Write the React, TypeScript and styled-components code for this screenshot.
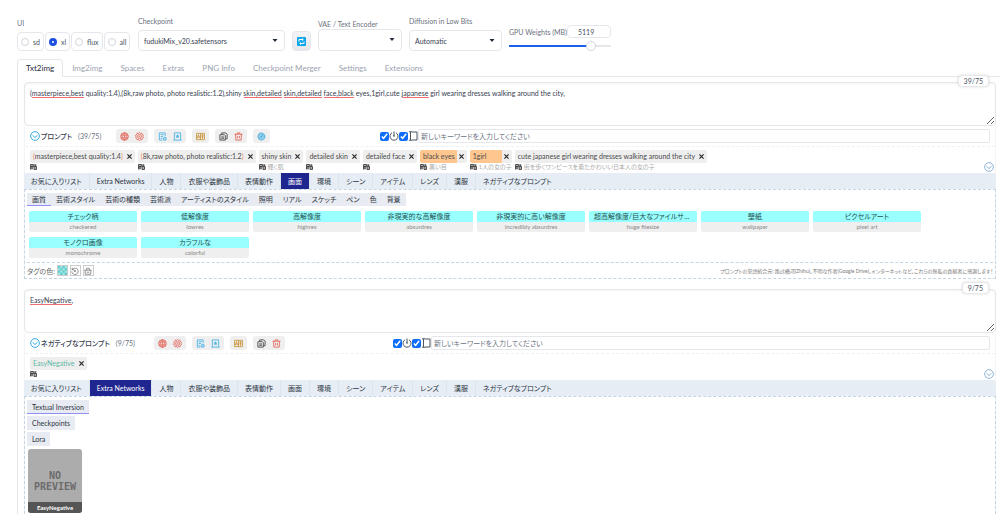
import React, { useLayoutEffect, useState } from "react";
import styled, { createGlobalStyle, css } from "styled-components";

const FONT = 'Lato, "Noto Sans CJK JP", sans-serif';

const GlobalStyle = createGlobalStyle`
  * { box-sizing: border-box; }
  body { margin: 0; background: #fff; color: #4b5563; font: 7px/10px ${FONT}; font-feature-settings: "palt"; }
  button, input, select, textarea { font: inherit; font-feature-settings: inherit; color: inherit; margin: 0; }
  button { padding: 0; border: 0; background: none; }
`;

/* ---------- header ---------- */

const Header = styled.header`
  display: flex;
  align-items: flex-end;
  gap: 7px;
  padding: 16px 17px 8px;
`;

const Field = styled.div<{ $width: number; $gap?: number }>`
  display: flex;
  flex: none;
  flex-direction: column;
  gap: ${(p) => p.$gap ?? 4}px;
  width: ${(p) => p.$width}px;
`;

const FieldLabel = styled.label`
  color: #6b7280;
  font-size: 7px;
  line-height: 10px;
  white-space: nowrap;
`;

const RadioGroup = styled.div`
  display: flex;
  gap: 1px;
`;

const RadioLabel = styled.label`
  display: flex;
  align-items: center;
  gap: 4px;
  height: 19px;
  padding: 0 3px;
  border: 1px solid #e5e7eb;
  border-radius: 4px;
  font-size: 7px;
`;

const Radio = styled.input`
  appearance: none;
  width: 8px;
  height: 8px;
  border: 1px solid #d1d5db;
  border-radius: 50%;
  background: #fff;
  &:checked { border: 3px solid #1d4fe0; }
`;

const SelectWrap = styled.div<{ $tall?: boolean }>`
  display: flex;
  position: relative;
  height: ${(p) => (p.$tall ? 22 : 21)}px;
  svg { position: absolute; right: 7px; top: 8px; pointer-events: none; }
`;

const Select = styled.select`
  appearance: none;
  width: 100%;
  padding: 0 16px 0 5px;
  border: 1px solid #e5e7eb;
  border-radius: 4px;
  background: #fff;
  font-size: 7px;
  color: #374151;
`;

const RefreshButton = styled.button`
  display: flex;
  align-items: center;
  justify-content: center;
  width: 19px;
  height: 20px;
  border: 1px solid #e5e7eb;
  border-radius: 4px;
  background: linear-gradient(#f3f4f6, #e5e7eb);
`;

const WeightRow = styled.div`
  display: flex;
  align-items: center;
  justify-content: space-between;
`;

const NumberBox = styled.input`
  width: 44px;
  height: 13px;
  padding: 0 10px;
  border: 1px solid #e5e7eb;
  border-radius: 4px;
  font-size: 7px;
`;

const Slider = styled.input`
  appearance: none;
  width: 100%;
  height: 10px;
  background: linear-gradient(90deg, #1d5fe8 80%, #e5e7eb 80%) center / 100% 2px no-repeat;
  &::-webkit-slider-thumb {
    appearance: none;
    width: 10px;
    height: 10px;
    border: 1px solid #d1d5db;
    border-radius: 50%;
    background: #fff;
  }
`;

/* ---------- main tabs ---------- */

const MainTabs = styled.nav`
  display: flex;
  height: 18px;
  margin-left: 17px;
  border-bottom: 1px solid #e5e7eb;
`;

const MainTab = styled.button<{ $active?: boolean }>`
  height: 18px;
  padding: 0 8px;
  font-size: 8px;
  line-height: 17px;
  color: #9ca3af;
  border: 1px solid transparent;
  border-bottom: 0;
  ${(p) => p.$active && css`
    color: #1f2937;
    background: #fff;
    border-color: #e5e7eb;
    border-radius: 4px 4px 0 0;
  `}
`;

const Panel = styled.main`
  margin-left: 17px;
  padding: 5px 4px 0 6px;
  border-left: 1px solid #e5e7eb;
`;

/* ---------- prompt block ---------- */

const PromptBlock = styled.section`
  margin-bottom: 10px;
  &:last-child { margin-bottom: 0; }
`;

const PromptField = styled.div`
  position: relative;
  display: flex;
`;

const PromptText = styled.textarea`
  display: block;
  width: 100%;
  height: 44px;
  padding: 5px;
  border: 1px solid #e5e7eb;
  border-radius: 4px;
  outline: 0;
  box-shadow: inset 0 1px 2px #0000000d;
  font-size: 7px;
  line-height: 10px;
  color: #374151;
`;

const Squiggle = styled.span`
  position: absolute;
  top: 15px;
  height: 1px;
  background: #f26d6d;
  pointer-events: none;
`;

const TokenBadge = styled.span`
  position: absolute;
  right: 7px;
  top: -7px;
  padding: 0 5px;
  border: 1px solid #e5e7eb;
  border-radius: 4px;
  background: #fff;
  box-shadow: 0 0 3px #0002;
  font-size: 7px;
  line-height: 10px;
`;

const ToolBox = styled.div`
  border: solid #f3f4f6;
  border-width: 0 1px;
`;

const Toolbar = styled.div`
  display: flex;
  align-items: center;
  height: 21px;
  padding: 0 5px;
  border-bottom: 1px dashed #f0f1f3;
`;

const Title = styled.div<{ $width: number }>`
  display: flex;
  align-items: center;
  gap: 1px;
  width: ${(p) => p.$width}px;
  flex: none;
  color: #374151;
  white-space: nowrap;
`;

const TitleText = styled.h2`
  margin: 0;
  font-size: 7px;
  line-height: 12px;
  font-weight: 500;
`;

const Count = styled.span`
  margin-left: 5px;
  font-size: 7px;
  color: #6b7280;
`;

const Tools = styled.div<{ $width: number }>`
  display: flex;
  gap: 6px;
  flex: none;
  width: ${(p) => p.$width}px;
`;

const ToolGroup = styled.div`
  display: flex;
  align-items: center;
  gap: 6px;
  height: 14px;
  padding: 0 4px;
  border-radius: 3px;
  background: #efefef;
`;

const ToolButton = styled.button<{ $color: string }>`
  display: flex;
  color: ${(p) => p.$color};
`;

const Toggle = styled.label`
  display: flex;
  align-items: center;
  flex: none;
`;

const Check = styled.input`
  width: 9px;
  height: 9px;
  accent-color: #0d6efd;
`;

const Keyword = styled.input`
  flex: 1;
  min-width: 0;
  height: 14px;
  padding: 0 2px;
  border: 1px solid #e5e7eb;
  border-radius: 2px;
  font-size: 7px;
  &::placeholder { color: #6b7280; opacity: 1; }
`;

const TagArea = styled.div`
  display: flex;
  align-items: flex-start;
  gap: 3px;
  height: 26px;
  padding: 3px 1px 0 5px;
`;

const TagItem = styled.div`
  display: flex;
  flex-direction: column;
`;

const Tag = styled.div`
  display: flex;
  height: 13px;
  border-radius: 2px;
  background: #eee;
  overflow: hidden;
`;

const TagText = styled.span<{ $tone?: "hot" | "net" }>`
  flex: 1;
  padding: 0 2px 0 3px;
  font-size: 7px;
  line-height: 12px;
  white-space: nowrap;
  color: ${(p) => (p.$tone === "net" ? "#5fb8a5" : "#4b4b4b")};
  background: ${(p) => (p.$tone === "hot" ? "#ffc78f" : "transparent")};
`;

const Paren = styled.span`
  color: #f08a5d;
`;

const TagClose = styled.button`
  display: flex;
  align-items: center;
  padding: 0 2px 0 1px;
  color: #222;
`;

const Translation = styled.div`
  display: flex;
  align-items: center;
  gap: 2px;
  height: 8px;
  color: #aaa;
  font-size: 6px;
  line-height: 8px;
  white-space: nowrap;
`;

const FoldButton = styled.button`
  display: flex;
  margin: 12px 0 0 auto;
  color: #8db4d8;
`;

/* ---------- keyword groups ---------- */

const GroupTabs = styled.div`
  display: flex;
  height: 16px;
  margin: 0 -1px;
  border-radius: 3px 3px 0 0;
  background: #e6edf5;
`;

const GroupTab = styled.button<{ $active?: boolean }>`
  padding: 0 7px;
  border-right: 1px solid #dce4ec;
  font-size: 7px;
  line-height: 15px;
  white-space: nowrap;
  color: ${(p) => (p.$active ? "#fff" : "#2b3440")};
  background: ${(p) => (p.$active ? "#20268f" : "transparent")};
  &:last-child { border-right: 0; }
`;

const GroupBody = styled.div<{ $open?: boolean }>`
  margin: 0 -1px;
  padding: 3px 2px 0;
  border: 1px dashed #c5d5e2;
  ${(p) => p.$open && css`border-bottom: 0; padding-bottom: 1px;`}
`;

const SubTabs = styled.div<{ $column?: boolean }>`
  display: flex;
  flex-direction: ${(p) => (p.$column ? "column" : "row")};
  align-items: flex-start;
  gap: ${(p) => (p.$column ? 2 : 0)}px;
`;

const SubTab = styled.button<{ $active?: boolean; $tall?: boolean }>`
  height: ${(p) => (p.$tall ? 14 : 13)}px;
  padding: 0 5px;
  background: #e8ebf1;
  border-bottom: 1px solid ${(p) => (p.$active ? "#8f8ff5" : "#e8ebf1")};
  font-size: 7px;
  line-height: 12px;
  white-space: nowrap;
  color: #2b3440;
`;

const CardGrid = styled.div`
  display: grid;
  grid-template-columns: repeat(auto-fill, 108px);
  gap: 5px 4px;
  padding: 5px 2px 4px;
`;

const Card = styled.button`
  display: flex;
  flex-direction: column;
  height: 21px;
  border-radius: 2px;
  overflow: hidden;
  background: #efefef;
  text-align: center;
`;

const CardName = styled.span`
  width: 100%;
  height: 11px;
  padding: 0 5px;
  background: #99ffff;
  font-size: 7px;
  line-height: 10px;
  color: #1f4f4f;
  white-space: nowrap;
  overflow: hidden;
  text-overflow: ellipsis;
`;

const CardTag = styled.span`
  width: 100%;
  font-size: 6px;
  line-height: 10px;
  color: #888;
`;

const BodyFooter = styled.footer`
  display: flex;
  align-items: center;
  gap: 2px;
  height: 16px;
  border-top: 1px dashed #c5d5e2;
  font-size: 7px;
  color: #666;
`;

const Swatch = styled.button`
  display: flex;
  align-items: center;
  justify-content: center;
  width: 11px;
  height: 11px;
  border: 1px solid #ccc;
  color: #777;
`;

const Credits = styled.small`
  margin-left: auto;
  font-size: 5px;
  line-height: 10px;
  color: #777;
  white-space: nowrap;
`;

const Preview = styled.figure`
  display: flex;
  flex-direction: column;
  width: 54px;
  height: 64px;
  margin: 3px 1px 0;
  border-radius: 3px;
  overflow: hidden;
  background: #acacac;
  text-align: center;
`;

const PreviewArt = styled.div`
  flex: 1;
  padding-top: 21px;
  font: bold 10px/11px "DejaVu Sans Mono", monospace;
  color: #6b6b6b;
`;

const PreviewName = styled.figcaption`
  background: #555;
  color: #fff;
  font-size: 6px;
  line-height: 11px;
  font-weight: 700;
`;

/* ---------- icons ---------- */

const Caret = () => (
  <svg width="6" height="5" viewBox="0 0 6 5"><path d="M0.5 1h5L3 4z" fill="#1f2937" /></svg>
);

const iconShapes = {
  globe: <><circle cx="10" cy="10" r="8.5" fill="currentColor" fillOpacity=".25" /><path d="M2 7h16M2 13h16M10 1.5v17M10 1.5c-6 5-6 12 0 17M10 1.5c6 5 6 12 0 17" strokeWidth="1.500" /></>,
  gear: <><path d="M10 1l2.4 2 3-.4.7 3 2.6 1.6L17.600 10l1.100 2.800-2.600 1.600-.7 3-3-.4L10 19l-2.400-2-3 .4-.7-3-2.600-1.600L2.400 10 1.300 7.200l2.600-1.600.7-3 3 .4z" /><circle cx="10" cy="10" r="4.500" /><circle cx="10" cy="10" r="1" /></>,
  history: <><path d="M16 9V2H3v16h7M6 6h7M6 10h5M6 14h3" /><circle cx="15" cy="15" r="3.500" fill="currentColor" fillOpacity=".4" /></>,
  bookmark: <><path d="M3 18V2h14v16" /><path d="M1 18h18" /><path d="M10 5l1.500 3 3 .4-2.200 2.200.5 3.200-2.800-1.500-2.800 1.500.5-3.200-2.200-2.200 3-.4z" fill="currentColor" stroke="none" /></>,
  translate: <><path d="M1 3h18v14H1zM10 3v14" /><path d="M3 14l2.500-8L8 14M4 11h3M12 7h5M14.500 5v10M12 11h5" /></>,
  copy: <><path d="M6 5V2h9l3 3v10h-3" /><path d="M2 6h10l2 2v10H2zM5 11h6M5 14h6" /></>,
  trash: <><path d="M1 5h18M7 5V2h6v3M3.500 5l.5 13h12l.5-13M8 9v5M12 9v5" /></>,
  openai: <><circle cx="10" cy="10" r="8.500" fill="currentColor" fillOpacity=".45" stroke="none" /><path d="M5 3l6-1 6 5v6l-5 5-7-1-3-7zM6 13l8-7M6 8l5 5M10 5l4 5" strokeWidth="1.500" /></>,
  down: <><circle cx="10" cy="10" r="8.700" /><path d="M5 8.500l5 4.500 5-4.500" /></>,
  power: <><path d="M6 3.500a8 8 0 1 0 8 0M10 1v9M8 10h4" /></>,
  cursor: <><path d="M8 2h10v16H8M5 2v16M2 1.500h6M2 18.500h6" /></>,
  close: <><path d="M4 4l12 12M16 4L4 16" strokeWidth="3" /></>,
  reset: <><path d="M3 7a8 8 0 1 1-1 4M3 2v5h5" /><circle cx="10" cy="10" r="1.500" fill="currentColor" /></>,
  basket: <><path d="M1 8h18M3 8v10h14V8M6 8l1-5h6l1 5M7 13h6" /></>,
};

const Icon = ({ name, size = 10 }: { name: keyof typeof iconShapes; size?: number }) => (
  <svg width={size} height={size} viewBox="0 0 20 20" fill="none" stroke="currentColor" strokeWidth="2">
    {iconShapes[name]}
  </svg>
);

const MiniTranslate = () => (
  <svg width="7" height="6" viewBox="0 0 14 12" fill="none" stroke="#222" strokeWidth="1.500">
    <path d="M1 1h6v4H1zM4 1v10M1 8h5M1 5v6M8 2h5M10.500 1v4M8 5h5v6H8zM8 8h5" />
  </svg>
);

const RefreshIcon = () => (
  <svg width="9" height="9" viewBox="0 0 18 18" fill="none" stroke="#fff" strokeWidth="2">
    <rect width="18" height="18" rx="2" fill="#0ea5e9" stroke="none" />
    <path d="M4 9V5h8M10 3l2.500 2L10 7M14 9v4H6M8 11l-2.500 2L8 15" />
  </svg>
);

const Checker = () => (
  <svg width="11" height="11" viewBox="0 0 4 4">
    <rect width="4" height="4" fill="#9fe9e6" />
    <path d="M0 0h1v1H0zM2 0h1v1H2zM1 1h1v1H1zM3 1h1v1H3zM0 2h1v1H0zM2 2h1v1H2zM1 3h1v1H1zM3 3h1v1H3z" fill="#63c9c9" />
  </svg>
);

/* ---------- data ---------- */

const groups = ["お気に入りリスト", "Extra Networks", "人物", "衣服や装飾品", "表情動作", "画面", "環境", "シーン", "アイテム", "レンズ", "漢服", "ネガティブなプロンプト"];
const subGroups = ["画質", "芸術スタイル", "芸術の種類", "芸術派", "アーティストのスタイル", "照明", "リアル", "スケッチ", "ペン", "色", "背景"];
const cards = [
  ["チェック柄", "checkered"], ["低解像度", "lowres"], ["高解像度", "highres"], ["非現実的な高解像度", "absurdres"],
  ["非現実的に高い解像度", "incredibly absurdres"], ["超高解像度/巨大なファイルサイズ", "huge filesize"], ["壁紙", "wallpaper"],
  ["ピクセルアート", "pixel art"], ["モノクロ画像", "monochrome"], ["カラフルな", "colorful"],
];

type TagData = { text: string; note?: string; weighted?: boolean; tone?: "hot" | "net" };

const promptTags: TagData[] = [
  { text: "masterpiece,best quality:1.4", weighted: true },
  { text: "8k,raw photo, photo realistic:1.2", weighted: true },
  { text: "shiny skin", note: "輝く肌" },
  { text: "detailed skin" },
  { text: "detailed face" },
  { text: "black eyes", note: "黒い目", tone: "hot" },
  { text: "1girl", note: "1人の女の子", tone: "hot" },
  { text: "cute japanese girl wearing dresses walking around the city", note: "街を歩くワンピースを着たかわいい日本人の女の子" },
];

type ToolDef = [keyof typeof iconShapes, string, string];
const toolGroups: ToolDef[][] = [
  [["globe", "#e2685c", "Language"], ["gear", "#e2685c", "Settings"]],
  [["history", "#4cb4e8", "History"], ["bookmark", "#4cb4e8", "Favorites"]],
  [["translate", "#c8963e", "Translate"]],
  [["copy", "#444", "Copy"], ["trash", "#e2685c", "Delete all"]],
  [["openai", "#38a9e0", "Generate"]],
];

/* Finds where each misspelled run sits in the first line of the prompt. */
function useMarks(text: string, words: string[]) {
  const [marks, setMarks] = useState<{ left: number; width: number }[]>([]);
  useLayoutEffect(() => {
    const ctx = document.createElement("canvas").getContext("2d");
    if (!ctx) return;
    ctx.font = `7px ${FONT}`;
    let from = 0;
    setMarks(words.map((word) => {
      const at = text.indexOf(word, from);
      from = at + word.length;
      return { left: 6 + ctx.measureText(text.slice(0, at)).width, width: ctx.measureText(word).width };
    }));
  }, []);
  return marks;
}

type PromptProps = {
  title: string; tokens: string; text: string; misspelled: string[]; tags: TagData[];
  tools: ToolDef[][]; titleWidth: number; toolsWidth: number; activeGroup: string; children: React.ReactNode;
};

function Prompt(p: PromptProps) {
  const marks = useMarks(p.text, p.misspelled);
  return (
    <PromptBlock>
      <PromptField>
        <PromptText aria-label={p.title} defaultValue={p.text} spellCheck={false} />
        {marks.map((m, i) => <Squiggle key={i} style={m} />)}
        <TokenBadge>{p.tokens}</TokenBadge>
      </PromptField>
      <ToolBox>
        <Toolbar>
          <Title $width={p.titleWidth}>
            <ToolButton $color="#38a9e0" aria-label="Fold"><Icon name="down" /></ToolButton>
            <TitleText>{p.title}</TitleText>
            <Count>({p.tokens})</Count>
          </Title>
          <Tools $width={p.toolsWidth}>
            {p.tools.map((group, i) => (
              <ToolGroup key={i}>
                {group.map(([name, color, label]) => (
                  <ToolButton key={name} $color={color} aria-label={label}><Icon name={name} size={9} /></ToolButton>
                ))}
              </ToolGroup>
            ))}
          </Tools>
          <Toggle><Check type="checkbox" defaultChecked aria-label="Auto load" /><Icon name="power" /></Toggle>
          <Toggle><Check type="checkbox" defaultChecked aria-label="Auto input" /><Icon name="cursor" /></Toggle>
          <Keyword aria-label="Keyword" placeholder="新しいキーワードを入力してください" />
        </Toolbar>
        <TagArea>
          {p.tags.map((t) => (
            <TagItem key={t.text}>
              <Tag>
                <TagText $tone={t.tone}>
                  {t.weighted ? <><Paren>(</Paren>{t.text}<Paren>)</Paren></> : t.text}
                </TagText>
                <TagClose aria-label="Remove"><Icon name="close" size={7} /></TagClose>
              </Tag>
              <Translation><MiniTranslate />{t.note && <span>{t.note}</span>}</Translation>
            </TagItem>
          ))}
          <FoldButton aria-label="Fold groups"><Icon name="down" /></FoldButton>
        </TagArea>
        <GroupTabs>
          {groups.map((g) => <GroupTab key={g} $active={g === p.activeGroup}>{g}</GroupTab>)}
        </GroupTabs>
        {p.children}
      </ToolBox>
    </PromptBlock>
  );
}

export default function App() {
  return (
    <>
      <GlobalStyle />
      <Header>
        <Field $width={114}>
          <FieldLabel as="span">UI</FieldLabel>
          <RadioGroup role="radiogroup" aria-label="UI">
            {["sd", "xl", "flux", "all"].map((v) => (
              <RadioLabel key={v}><Radio type="radio" name="ui" defaultChecked={v === "xl"} />{v}</RadioLabel>
            ))}
          </RadioGroup>
        </Field>
        <Field $width={147}>
          <FieldLabel htmlFor="checkpoint">Checkpoint</FieldLabel>
          <SelectWrap><Select id="checkpoint"><option>fudukiMix_v20.safetensors</option></Select><Caret /></SelectWrap>
        </Field>
        <RefreshButton aria-label="Refresh"><RefreshIcon /></RefreshButton>
        <Field $width={84} $gap={0}>
          <FieldLabel htmlFor="vae">VAE / Text Encoder</FieldLabel>
          <SelectWrap $tall><Select id="vae"><option></option></Select><Caret /></SelectWrap>
        </Field>
        <Field $width={93}>
          <FieldLabel htmlFor="bits">Diffusion in Low Bits</FieldLabel>
          <SelectWrap><Select id="bits"><option>Automatic</option></Select><Caret /></SelectWrap>
        </Field>
        <Field $width={102} $gap={3}>
          <WeightRow>
            <FieldLabel htmlFor="weights">GPU Weights (MB)</FieldLabel>
            <NumberBox id="weights" defaultValue="5119" />
          </WeightRow>
          <Slider type="range" min={0} max={6144} defaultValue={5119} aria-label="GPU Weights slider" />
        </Field>
      </Header>
      <MainTabs>
        {["Txt2img", "Img2img", "Spaces", "Extras", "PNG Info", "Checkpoint Merger", "Settings", "Extensions"].map((t, i) => (
          <MainTab key={t} $active={i === 0}>{t}</MainTab>
        ))}
      </MainTabs>
      <Panel>
        <Prompt
          title="プロンプト" tokens="39/75"
          text="(masterpiece,best quality:1.4),(8k,raw photo, photo realistic:1.2),shiny skin,detailed skin,detailed face,black eyes,1girl,cute japanese girl wearing dresses walking around the city,"
          misspelled={["masterpiece,best", "skin,detailed", "skin,detailed", "face,black", "japanese"]}
          tags={promptTags} tools={toolGroups} titleWidth={86} toolsWidth={264} activeGroup="画面"
        >
          <GroupBody>
            <SubTabs>{subGroups.map((s, i) => <SubTab key={s} $active={i === 0}>{s}</SubTab>)}</SubTabs>
            <CardGrid>
              {cards.map(([name, tag]) => <Card key={tag}><CardName>{name}</CardName><CardTag>{tag}</CardTag></Card>)}
            </CardGrid>
            <BodyFooter>
              <span>タグの色:</span>
              <Swatch aria-label="Color"><Checker /></Swatch>
              <Swatch aria-label="Reset color"><Icon name="reset" size={8} /></Swatch>
              <Swatch aria-label="Clear color"><Icon name="basket" size={8} /></Swatch>
              <Credits>プロンプトの単語統合元: 路过橋河(Zhihu)、不明な作者(Google Drive)、インターネットなど、これらの無私の貢献者に感謝します！</Credits>
            </BodyFooter>
          </GroupBody>
        </Prompt>
        <Prompt
          title="ネガティブなプロンプト" tokens="9/75" text="EasyNegative," misspelled={["EasyNegative"]}
          tags={[{ text: "EasyNegative", tone: "net" }]} tools={toolGroups.slice(0, 4)}
          titleWidth={124} toolsWidth={239} activeGroup="Extra Networks"
        >
          <GroupBody $open>
            <SubTabs $column>
              {["Textual Inversion", "Checkpoints", "Lora"].map((s, i) => <SubTab key={s} $tall $active={i === 0}>{s}</SubTab>)}
            </SubTabs>
            <Preview>
              <PreviewArt>NO<br />PREVIEW</PreviewArt>
              <PreviewName>EasyNegative</PreviewName>
            </Preview>
          </GroupBody>
        </Prompt>
      </Panel>
    </>
  );
}
